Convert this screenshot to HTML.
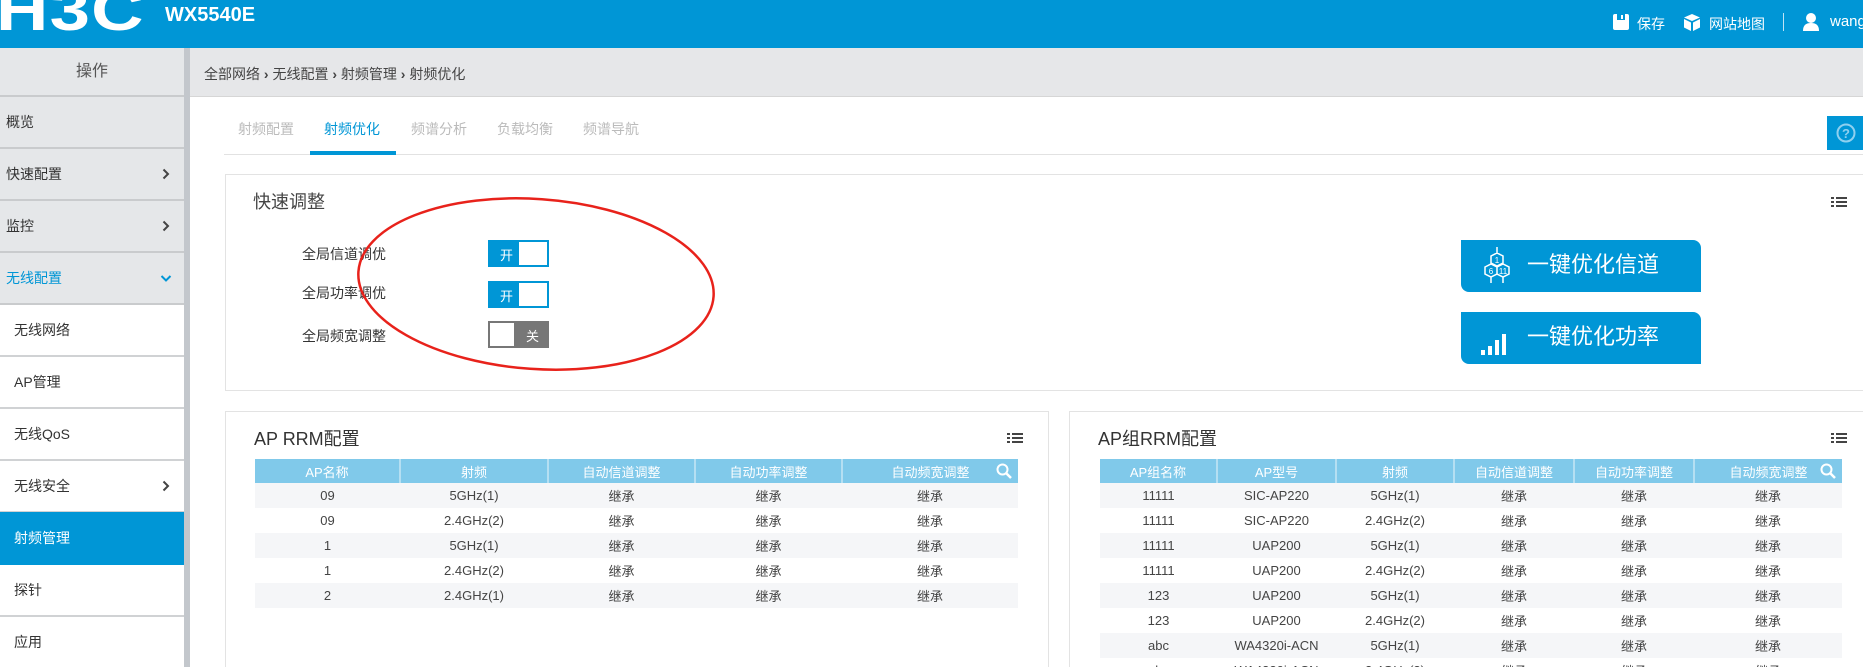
<!DOCTYPE html>
<html style="width:1863px;height:667px;overflow:hidden"><head><meta charset="utf-8"><style>
*{box-sizing:border-box;margin:0;padding:0}
body{width:1863px;height:667px;overflow:hidden;background:#fff;font-family:"Liberation Sans","Noto Sans CJK SC",sans-serif;color:#333;position:relative}
.a{position:absolute}
#hdr{left:0;top:0;width:1863px;height:48px;background:#0096d6;color:#fff;overflow:hidden}
#side{left:0;top:48px;width:184px;height:619px;background:#e5e7e9}
.si{position:absolute;left:0;width:184px;height:52px;border-bottom:2px solid #c9cbcd;font-size:14px;line-height:50px;padding-left:6px;color:#333}
.si .ch{position:absolute;right:14px;top:19px}
.sub{background:#fff;padding-left:14px;border-bottom:2px solid #d0d2d4}
table{border-collapse:collapse;font-size:13px;table-layout:fixed}
th{background:#80c9ea;color:#fff;font-weight:normal;height:24px;border-left:2px solid #b5dff2;position:relative}
th:first-child{border-left:none}
td{height:25px;text-align:center;color:#444}
tr:nth-child(even) td{background:#f5f6f8}
.tog{position:absolute;left:488px;width:61px;height:27px;border:2px solid #0096d6;background:#0096d6}
.tog .k{position:absolute;right:0;top:0;width:28px;height:23px;background:#fff}
.tog span{position:absolute;left:10px;top:3px;color:#fff;font-size:13px}
.btn{position:absolute;left:1461px;width:240px;height:52px;background:#0096d6;border-radius:0 8px 0 8px;color:#fff;font-size:22px;line-height:50px;padding-left:66px}
.menu{position:absolute;width:16px;height:12px}
.menu i{display:block;height:2px;background:#444;margin-bottom:2px;border-left:3px solid #444;box-shadow:inset 2px 0 0 #fff}
.srch{position:absolute;right:6px;top:4px}
</style></head><body>
<div id="hdr" class="a">
<div class="a" style="left:-4px;top:-23px;font-size:58px;font-weight:bold;letter-spacing:1px;transform:scaleX(1.25);transform-origin:0 0;font-family:'Liberation Sans',sans-serif">H3C</div>
<div class="a" style="left:165px;top:4px;font-size:20px;font-weight:bold;font-family:'Liberation Sans Narrow','Liberation Sans',sans-serif">WX5540E</div>
<svg class="a" style="left:1612px;top:13px" width="18" height="18"><rect x="1" y="1" width="16" height="16" rx="2" fill="#fff"/><rect x="5" y="1" width="8" height="6" fill="#0096d6"/><rect x="9" y="2" width="2" height="4" fill="#fff"/></svg>
<div class="a" style="left:1637px;top:14px;font-size:14px">保存</div>
<svg class="a" style="left:1683px;top:13px" width="18" height="19"><path d="M9 1L17 4.5 9 8 1 4.5Z M1 6L8 9.5V18L1 14.5Z M10 9.5L17 6V14.5L10 18Z" fill="#fff"/></svg>
<div class="a" style="left:1709px;top:14px;font-size:14px">网站地图</div>
<div class="a" style="left:1783px;top:13px;width:1px;height:18px;background:#bfe3f5"></div>
<svg class="a" style="left:1802px;top:12px" width="18" height="19"><circle cx="9" cy="6" r="5" fill="#fff"/><path d="M1 19C1 13 4 11 9 11 14 11 17 13 17 19Z" fill="#fff"/></svg>
<div class="a" style="left:1830px;top:13px;font-size:15px">wang</div>
</div>
<div id="side" class="a">
<div class="si" style="top:0;height:49px;text-align:center;padding:0;font-size:16px;line-height:48px;color:#555">操作</div>
<div class="si" style="top:49px">概览</div>
<div class="si" style="top:101px">快速配置<svg class="ch" width="8" height="12"><path d="M1.5 1.5L6 6 1.5 10.5" fill="none" stroke="#444" stroke-width="2"/></svg></div>
<div class="si" style="top:153px">监控<svg class="ch" width="8" height="12"><path d="M1.5 1.5L6 6 1.5 10.5" fill="none" stroke="#444" stroke-width="2"/></svg></div>
<div class="si" style="top:205px;color:#0096d6">无线配置<svg class="ch" width="12" height="10" style="top:21px;right:12px"><path d="M1.5 2L6 6.5 10.5 2" fill="none" stroke="#0096d6" stroke-width="2"/></svg></div>
<div class="si sub" style="top:257px">无线网络</div>
<div class="si sub" style="top:309px">AP管理</div>
<div class="si sub" style="top:361px">无线QoS</div>
<div class="si sub" style="top:413px">无线安全<svg class="ch" width="8" height="12"><path d="M1.5 1.5L6 6 1.5 10.5" fill="none" stroke="#444" stroke-width="2"/></svg></div>
<div class="si" style="top:464px;background:#0096d6;color:#fff;padding-left:14px;border:none;height:53px;line-height:53px">射频管理</div>
<div class="si sub" style="top:517px">探针</div>
<div class="si sub" style="top:569px;border:none">应用</div>
</div>
<div class="a" style="left:184px;top:48px;width:6px;height:619px;background:#c3c7cc"></div>
<div class="a" style="left:190px;top:48px;width:1673px;height:49px;background:#e6e7e9;border-bottom:1px solid #d6d6d6"></div>
<div class="a" style="left:204px;top:64px;font-size:14px;color:#444">全部网络 <b>›</b> 无线配置 <b>›</b> 射频管理 <b>›</b> 射频优化</div>
<div class="a" style="left:224px;top:154px;width:1639px;height:1px;background:#e2e2e2"></div>
<div class="a" style="left:238px;top:119px;font-size:14px;color:#bbb">射频配置</div>
<div class="a" style="left:324px;top:119px;font-size:14px;color:#0096d6">射频优化</div>
<div class="a" style="left:411px;top:119px;font-size:14px;color:#bbb">频谱分析</div>
<div class="a" style="left:497px;top:119px;font-size:14px;color:#bbb">负载均衡</div>
<div class="a" style="left:583px;top:119px;font-size:14px;color:#bbb">频谱导航</div>
<div class="a" style="left:310px;top:151px;width:86px;height:4px;background:#0096d6"></div>
<div class="a" style="left:1827px;top:116px;width:36px;height:34px;background:#0096d6"></div>
<svg class="a" style="left:1836px;top:123px" width="20" height="20"><circle cx="10" cy="10" r="8.5" fill="none" stroke="#8fd0ef" stroke-width="2"/><text x="10" y="15" font-size="13" font-family="Liberation Sans" font-weight="bold" fill="#8fd0ef" text-anchor="middle">?</text></svg>

<div class="a" style="left:225px;top:174px;width:1650px;height:217px;border:1px solid #e3e3e3"></div>
<div class="a" style="left:253px;top:188px;font-size:18px;color:#444">快速调整</div>
<div class="menu" style="left:1831px;top:197px"><i></i><i></i><i></i></div>
<div class="a" style="left:302px;top:244px;font-size:14px">全局信道调优</div>
<div class="a" style="left:302px;top:283px;font-size:14px">全局功率调优</div>
<div class="a" style="left:302px;top:326px;font-size:14px">全局频宽调整</div>
<div class="tog" style="top:240px"><span>开</span><div class="k"></div></div>
<div class="tog" style="top:281px"><span>开</span><div class="k"></div></div>
<div class="tog" style="top:321px;background:#777;border-color:#777"><div class="k" style="left:0;right:auto;width:24px"></div><span style="left:36px">关</span></div>
<svg class="a" style="left:352px;top:190px" width="370" height="190"><ellipse cx="184" cy="94" rx="178" ry="85" transform="rotate(4 184 94)" fill="none" stroke="#e8221b" stroke-width="2.5"/></svg>
<div class="btn" style="top:240px">一键优化信道
<svg class="a" style="left:20px;top:7px" width="32" height="42" fill="none" stroke="#fff" stroke-width="1.5"><path d="M16 0V6M10 9L16 6 22 9V16L16 19 10 16Z M4 20L10 17 16 20V27L10 30 4 27Z M16 20L22 17 28 20V27L22 30 16 27Z M10 30V36M22 30V36"/><text x="16" y="16" font-size="8" fill="#fff" stroke="none" text-anchor="middle" font-family="Liberation Sans">1</text><text x="10" y="27" font-size="8" fill="#fff" stroke="none" text-anchor="middle" font-family="Liberation Sans">6</text><text x="22" y="27" font-size="8" fill="#fff" stroke="none" text-anchor="middle" font-family="Liberation Sans">11</text></svg></div>
<div class="btn" style="top:312px">一键优化功率
<svg class="a" style="left:20px;top:13px" width="32" height="32" fill="#fff"><rect x="0" y="25" width="4" height="5"/><rect x="7" y="21" width="4" height="9"/><rect x="14" y="15" width="4" height="15"/><rect x="21" y="9" width="4" height="21"/></svg></div>

<div class="a" style="left:225px;top:411px;width:824px;height:270px;border:1px solid #e3e3e3;border-bottom:none"></div>
<div class="a" style="left:254px;top:425px;font-size:18px;color:#333">AP RRM配置</div>
<div class="menu" style="left:1007px;top:433px"><i></i><i></i><i></i></div>
<table class="a" style="left:255px;top:459px;width:763px">
<colgroup><col style="width:145px"><col style="width:148px"><col style="width:147px"><col style="width:147px"><col style="width:176px"></colgroup>
<tr><th>AP名称</th><th>射频</th><th>自动信道调整</th><th>自动功率调整</th><th>自动频宽调整<svg class="srch" width="16" height="16"><circle cx="6.5" cy="6.5" r="5" fill="none" stroke="#fff" stroke-width="2"/><path d="M10 10L15 15" stroke="#fff" stroke-width="2.5"/></svg></th></tr>
<tr><td>09</td><td>5GHz(1)</td><td>继承</td><td>继承</td><td>继承</td></tr>
<tr><td>09</td><td>2.4GHz(2)</td><td>继承</td><td>继承</td><td>继承</td></tr>
<tr><td>1</td><td>5GHz(1)</td><td>继承</td><td>继承</td><td>继承</td></tr>
<tr><td>1</td><td>2.4GHz(2)</td><td>继承</td><td>继承</td><td>继承</td></tr>
<tr><td>2</td><td>2.4GHz(1)</td><td>继承</td><td>继承</td><td>继承</td></tr>
</table>
<div class="a" style="left:1069px;top:411px;width:810px;height:270px;border:1px solid #e3e3e3;border-bottom:none"></div>
<div class="a" style="left:1098px;top:425px;font-size:18px;color:#333">AP组RRM配置</div>
<div class="menu" style="left:1831px;top:433px"><i></i><i></i><i></i></div>
<table class="a" style="left:1100px;top:459px;width:742px">
<colgroup><col style="width:117px"><col style="width:119px"><col style="width:118px"><col style="width:120px"><col style="width:120px"><col style="width:148px"></colgroup>
<tr><th>AP组名称</th><th>AP型号</th><th>射频</th><th>自动信道调整</th><th>自动功率调整</th><th>自动频宽调整<svg class="srch" width="16" height="16"><circle cx="6.5" cy="6.5" r="5" fill="none" stroke="#fff" stroke-width="2"/><path d="M10 10L15 15" stroke="#fff" stroke-width="2.5"/></svg></th></tr>
<tr><td>11111</td><td>SIC-AP220</td><td>5GHz(1)</td><td>继承</td><td>继承</td><td>继承</td></tr>
<tr><td>11111</td><td>SIC-AP220</td><td>2.4GHz(2)</td><td>继承</td><td>继承</td><td>继承</td></tr>
<tr><td>11111</td><td>UAP200</td><td>5GHz(1)</td><td>继承</td><td>继承</td><td>继承</td></tr>
<tr><td>11111</td><td>UAP200</td><td>2.4GHz(2)</td><td>继承</td><td>继承</td><td>继承</td></tr>
<tr><td>123</td><td>UAP200</td><td>5GHz(1)</td><td>继承</td><td>继承</td><td>继承</td></tr>
<tr><td>123</td><td>UAP200</td><td>2.4GHz(2)</td><td>继承</td><td>继承</td><td>继承</td></tr>
<tr><td>abc</td><td>WA4320i-ACN</td><td>5GHz(1)</td><td>继承</td><td>继承</td><td>继承</td></tr>
<tr><td>abc</td><td>WA4320i-ACN</td><td>2.4GHz(2)</td><td>继承</td><td>继承</td><td>继承</td></tr>
</table>
</body></html>
